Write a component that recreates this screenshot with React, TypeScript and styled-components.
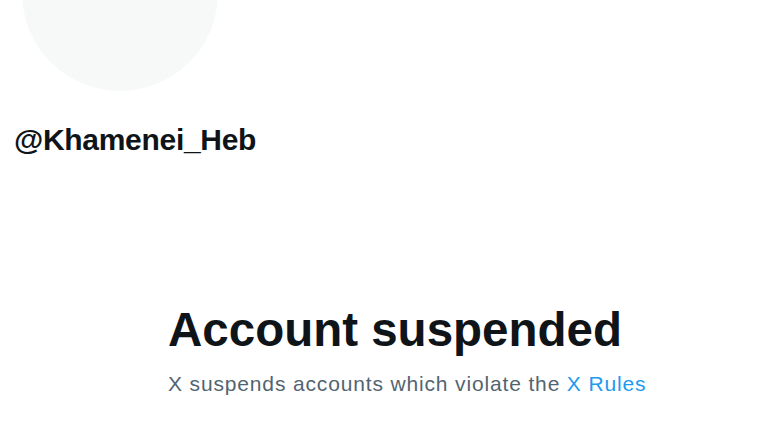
import React from "react";
import styled, { createGlobalStyle } from "styled-components";

const Global = createGlobalStyle`
  html, body { margin: 0; padding: 0; background: #ffffff; }
  body { font-family: "Liberation Sans", Arial, sans-serif; overflow: hidden; }
`;

const Page = styled.div`
  width: 768px;
  height: 432px;
  display: flex;
  flex-direction: column;
  overflow: hidden;
  background: #fff;
`;

const Header = styled.div`
  padding: 0 0 0 14px;
  display: flex;
  flex-direction: column;
`;

const Avatar = styled.div`
  width: 196px;
  height: 196px;
  border-radius: 50%;
  background: #f7f9f9;
  margin: -105px 0 0 8px;
`;

const Handle = styled.div`
  margin-top: 32px;
  font-size: 30px;
  font-weight: 700;
  color: #0f1419;
  line-height: 34px;
  letter-spacing: -0.3px;
`;

const Notice = styled.div`
  margin-top: 146px;
  padding-left: 168px;
  display: flex;
  flex-direction: column;
`;

const Title = styled.h1`
  margin: 0;
  font-size: 47.5px;
  line-height: 54px;
  font-weight: 700;
  color: #0f1419;
`;

const Sub = styled.p`
  margin: 14px 0 0;
  font-size: 21px;
  line-height: 26px;
  letter-spacing: 0.85px;
  color: #536471;
`;

const Link = styled.a`
  color: #1d9bf0;
  text-decoration: none;
`;

export default function App() {
  return (
    <Page>
      <Global />
      <Header>
        <Avatar />
        <Handle>@Khamenei_Heb</Handle>
      </Header>
      <Notice>
        <Title>Account suspended</Title>
        <Sub>
          X suspends accounts which violate the <Link href="#">X Rules</Link>
        </Sub>
      </Notice>
    </Page>
  );
}
